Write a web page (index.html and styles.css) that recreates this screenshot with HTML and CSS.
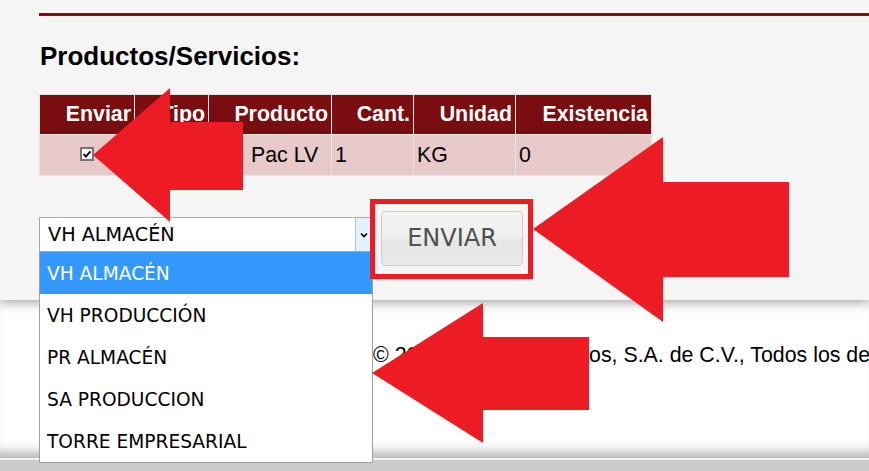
FILE: index.html
```html
<!DOCTYPE html>
<html lang="es">
<head>
<meta charset="utf-8">
<title>Productos/Servicios</title>
<link rel="stylesheet" href="styles.css">
</head>
<body>
<div class="page">
  <section class="panel">
    <div class="rule"></div>
    <h2 class="title">Productos/Servicios:</h2>
    <table class="grid">
      <thead>
        <tr>
          <th class="c-env">Enviar</th>
          <th class="c-tipo">Tipo</th>
          <th class="c-prod">Producto</th>
          <th class="c-cant">Cant.</th>
          <th class="c-uni">Unidad</th>
          <th class="c-exist">Existencia</th>
        </tr>
      </thead>
      <tbody>
        <tr>
          <td class="cell-center"><span class="check"><svg viewBox="0 0 13 13" width="12" height="12"><path d="M2 6.5 L5 9.8 L11 3" fill="none" stroke="#000" stroke-width="2.4"/></svg></span></td>
          <td></td>
          <td><span class="prod">Pac LV</span></td>
          <td>1</td>
          <td>KG</td>
          <td>0</td>
        </tr>
      </tbody>
    </table>
    <div class="actions">
      <div class="select-wrap">
        <div class="select">
          <span class="sel-text">VH ALMACÉN</span>
          <span class="sel-btn"><svg viewBox="0 0 8 6" width="8" height="6"><path d="M1 1.5 L4 4.5 L7 1.5" fill="none" stroke="#000" stroke-width="1.6"/></svg></span>
        </div>
        <ul class="options">
          <li class="opt opt-active">VH ALMACÉN</li>
          <li class="opt">VH PRODUCCIÓN</li>
          <li class="opt">PR ALMACÉN</li>
          <li class="opt">SA PRODUCCION</li>
          <li class="opt">TORRE EMPRESARIAL</li>
        </ul>
      </div>
      <button class="btn" type="button">ENVIAR</button>
    </div>
  </section>
  <footer class="footer">
    <p class="copy">© 2017 Norte Ganaderos, S.A. de C.V., Todos los derechos reservados.</p>
  </footer>
  <svg class="annot" viewBox="0 0 869 471" width="869" height="471">
    <rect x="372.5" y="201.5" width="158" height="75" fill="none" stroke="#ed1c24" stroke-width="5"/>
    <polygon points="93,155 170,88 170,122 243,122 243,190 170,190 170,222" fill="#ed1c24"/>
    <polygon points="533,229 663,137 663,182 789,182 789,277 663,277 663,322" fill="#ed1c24"/>
    <polygon points="372,373 483,303 483,337 589,337 589,410 483,410 483,443" fill="#ed1c24"/>
  </svg>
</div>
</body>
</html>
```

FILE: styles.css
```css
html, body {
  margin: 0;
  padding: 0;
  overflow: hidden;
  background: #cbcbcb;
}

.page {
  position: relative;
  width: 869px;
  height: 471px;
  overflow: hidden;
  font-family: "Liberation Sans", Arial, sans-serif;
  color: #000;
}

.panel {
  position: relative;
  z-index: 2;
  box-sizing: border-box;
  height: 300px;
  padding: 13px 0 0 39px;
  background: #f5f5f5;
  box-shadow: 0 3px 10px rgba(0, 0, 0, 0.35);
}

.rule {
  height: 3px;
  background: #8c0b0d;
}

.title {
  margin: 25px 0 23px 1px;
  font-size: 26px;
  line-height: 30px;
  font-weight: bold;
}

.grid {
  border-collapse: separate;
  border-spacing: 1px;
  background: #e4e4e4;
  table-layout: fixed;
  width: 613px;
  font-size: 21.33px;
}

.grid th,
.grid td {
  box-sizing: border-box;
  padding: 0 3px;
  white-space: nowrap;
}

.grid th {
  height: 39px;
  background: #790d0f;
  color: #fff;
  text-align: right;
  font-weight: bold;
}

.grid td {
  height: 40px;
  background: #e8c9c9;
  text-align: left;
}

.c-env { width: 94px; }
.c-tipo { width: 73px; }
.c-prod { width: 122px; }
.c-cant { width: 81px; }
.c-uni { width: 101px; }
.c-exist { width: 135px; }

.grid td.cell-center {
  text-align: center;
}

.check {
  display: inline-flex;
  align-items: center;
  justify-content: center;
  box-sizing: border-box;
  width: 14px;
  height: 14px;
  border: 2px solid #767676;
  background: #fff;
  vertical-align: middle;
  position: relative;
  top: -2px;
}

.prod {
  margin-left: 39px;
}

.actions {
  display: flex;
  align-items: flex-start;
  margin-top: 35px;
}

.select-wrap {
  position: relative;
  margin-top: 6px;
  width: 334px;
}

.select {
  display: flex;
  box-sizing: border-box;
  height: 35px;
  border: 1px solid #a9a9a9;
  background: #fff;
  font-family: "DejaVu Sans", Verdana, sans-serif;
  font-size: 19.2px;
  line-height: 33px;
}

.sel-text {
  flex: 1;
  padding-left: 8px;
}

.sel-btn {
  display: flex;
  align-items: center;
  justify-content: center;
  box-sizing: border-box;
  width: 17px;
  background: #e5f1fb;
  border-left: 1px solid #9ec5ec;
}

.options {
  position: absolute;
  top: 35px;
  left: 0;
  z-index: 5;
  box-sizing: border-box;
  width: 334px;
  margin: 0;
  padding: 0;
  list-style: none;
  background: #fff;
  border: 1px solid #a0a0a0;
  border-top: 0;
  font-family: "DejaVu Sans", Verdana, sans-serif;
  font-size: 18.6px;
}

.opt {
  height: 42px;
  box-sizing: border-box;
  padding: 2px 0 0 7px;
  line-height: 40px;
  white-space: nowrap;
}

.opt-active {
  background: #3399ff;
  color: #fff;
}

.btn {
  box-sizing: border-box;
  width: 142px;
  height: 55px;
  margin-left: 8px;
  padding: 0;
  border: 1px solid #cdcdcd;
  border-radius: 5px;
  background: linear-gradient(#f4f4f4 0%, #eeeeee 50%, #e6e6e6 52%, #e8e8e8 100%);
  color: #4f4f4f;
  font-family: "DejaVu Sans", Verdana, sans-serif;
  font-size: 24px;
  line-height: 53px;
  text-align: center;
}

.footer {
  position: relative;
  z-index: 1;
  box-sizing: border-box;
  height: 160px;
  background: #fff;
  border-bottom: 2px solid #f2f2f2;
  box-shadow: inset 0 -14px 12px -8px rgba(0, 0, 0, 0.3);
  padding-top: 43px;
}

.copy {
  margin: 0 0 0 373px;
  font-size: 21.33px;
  line-height: 24px;
  white-space: nowrap;
}

.annot {
  position: absolute;
  top: 0;
  left: 0;
  z-index: 10;
  pointer-events: none;
}
```
